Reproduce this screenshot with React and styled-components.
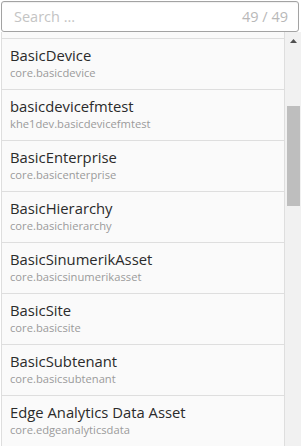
import React from 'react';
import styled, { createGlobalStyle } from 'styled-components';

const GlobalStyle = createGlobalStyle`
  html, body {
    margin: 0;
    padding: 0;
    background: #ffffff;
  }
  body {
    font-family: "Open Sans", "Noto Sans", sans-serif;
  }
`;

const Frame = styled.div`
  width: 301px;
  height: 446px;
  display: flex;
  flex-direction: column;
  overflow: hidden;
`;

const SearchWrap = styled.div`
  padding: 1px 2px 0 1px;
`;

const SearchBox = styled.label`
  height: 29px;
  display: flex;
  align-items: center;
  justify-content: space-between;
  padding: 0 10px 0 12px;
  border: 1px solid #a3a3a3;
  border-radius: 3px;
  background: #ffffff;
  box-shadow: inset 0 1px 1px rgba(0, 0, 0, 0.06);
`;

const SearchInput = styled.input`
  flex: 1;
  min-width: 0;
  border: none;
  outline: none;
  padding: 0;
  background: transparent;
  font-family: inherit;
  font-size: 14.5px;
  color: #333;
  &::placeholder {
    color: #c4c4c4;
  }
`;

const Count = styled.span`
  font-size: 14.5px;
  color: #b8b8b8;
  white-space: nowrap;
`;

const Panel = styled.div`
  flex: 1;
  display: flex;
  min-height: 0;
`;

const List = styled.div`
  flex: 1;
  overflow: hidden;
  margin-left: 1px;
  border-left: 1px solid #dedede;
  border-right: 1px solid #dedede;
  background: #fafafa;
`;

const Rows = styled.div`
  margin-top: -44px;
`;

const Row = styled.div`
  height: 51px;
  box-sizing: border-box;
  padding: 7px 8px 0;
  border-bottom: 1px solid #dedede;
  cursor: pointer;
`;

const Title = styled.div`
  font-size: 14.8px;
  line-height: 19px;
  color: #2b2b2b;
  white-space: nowrap;
`;

const Sub = styled.div`
  font-size: 11.2px;
  line-height: 15px;
  color: #9a9a9a;
  white-space: nowrap;
`;

const Scrollbar = styled.div`
  width: 16px;
  background: #f1f1f1;
  display: flex;
  flex-direction: column;
`;

const Arrow = styled.div`
  height: 17px;
  display: flex;
  justify-content: center;
  padding-top: 7px;
  box-sizing: border-box;
`;

const Thumb = styled.div`
  height: 100px;
  margin: 57px 1px 0 2px;
  background: #bebebe;
`;

const items = [
  ['BasicAgent', 'core.basicagent'],
  ['BasicDevice', 'core.basicdevice'],
  ['basicdevicefmtest', 'khe1dev.basicdevicefmtest'],
  ['BasicEnterprise', 'core.basicenterprise'],
  ['BasicHierarchy', 'core.basichierarchy'],
  ['BasicSinumerikAsset', 'core.basicsinumerikasset'],
  ['BasicSite', 'core.basicsite'],
  ['BasicSubtenant', 'core.basicsubtenant'],
  ['Edge Analytics Data Asset', 'core.edgeanalyticsdata'],
];

export default function App() {
  return (
    <>
      <GlobalStyle />
      <Frame>
        <SearchWrap>
          <SearchBox>
            <SearchInput placeholder="Search ..." />
            <Count>49 / 49</Count>
          </SearchBox>
        </SearchWrap>
        <Panel>
          <List>
            <Rows>
              {items.map(([name, id]) => (
                <Row key={id}>
                  <Title>{name}</Title>
                  <Sub>{id}</Sub>
                </Row>
              ))}
            </Rows>
          </List>
          <Scrollbar>
            <Arrow>
              <svg width="7" height="4" viewBox="0 0 7 4">
                <path d="M0 4 L3.5 0 L7 4 Z" fill="#505050" />
              </svg>
            </Arrow>
            <Thumb />
          </Scrollbar>
        </Panel>
      </Frame>
    </>
  );
}
